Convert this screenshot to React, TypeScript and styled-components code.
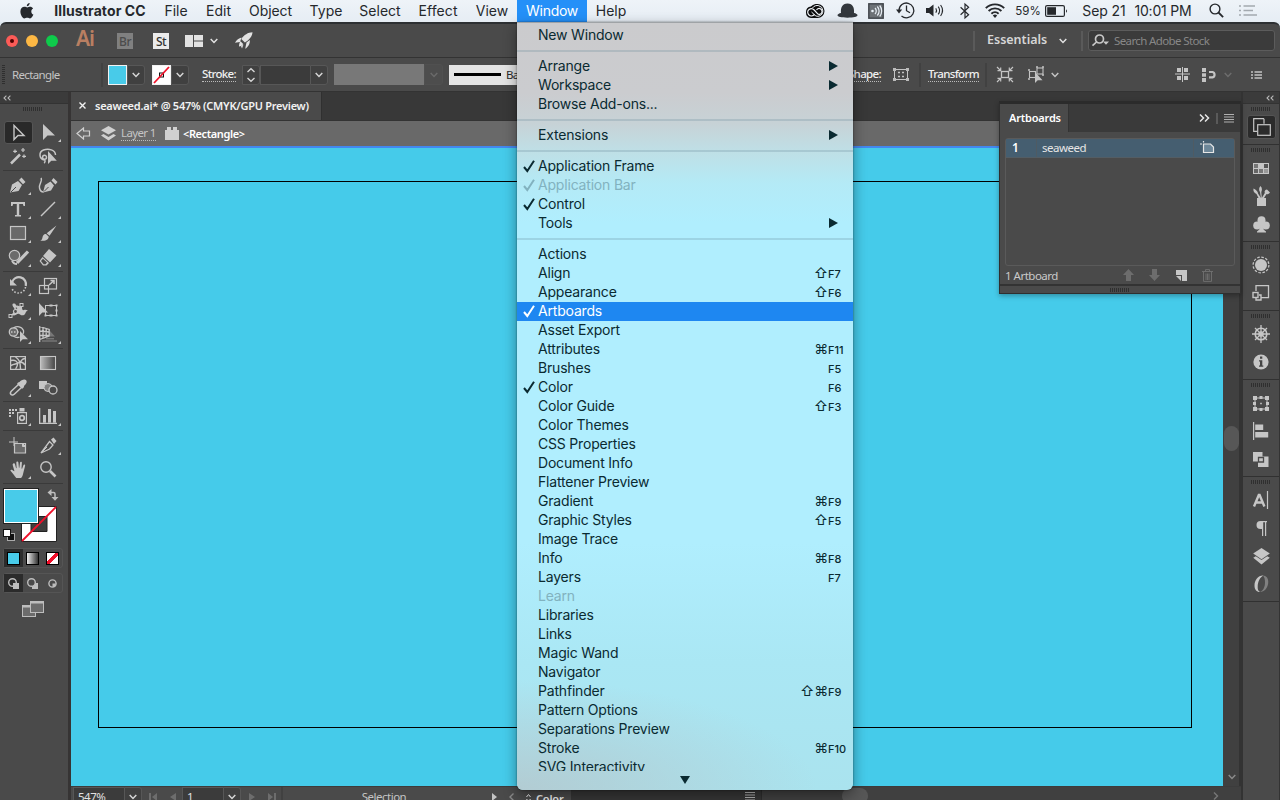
import React from 'react';
import styled, { createGlobalStyle, css } from 'styled-components';

const UI = `'Noto Sans', 'Open Sans', sans-serif`;
const SYSTEM = `Inter, Roboto, sans-serif`;

const GlobalStyle = createGlobalStyle`
  * { box-sizing: border-box; }
  body {
    margin: 0;
    width: 1280px;
    height: 800px;
    overflow: hidden;
    background: #dfe8ef;
    font-family: ${UI};
  }
  svg { display: block; flex: none; overflow: visible; }
`;

const Screen = styled.div`
  position: relative;
  display: flex;
  flex-direction: column;
  width: 1280px;
  height: 800px;
  overflow: hidden;
`;

/* ---------- system menu bar ---------- */

const MenuBar = styled.header`
  display: flex;
  flex: none;
  height: 22px;
  background: linear-gradient(#eef3f8, #e6edf4);
  font-family: ${SYSTEM};
  font-size: 14px;
  color: #25282c;
`;

const MenuCell = styled.div<{ $w: number; $active?: boolean; $bold?: boolean; $ls?: number; $size?: number }>`
  display: flex;
  flex: none;
  align-items: center;
  justify-content: center;
  width: ${p => p.$w}px;
  height: 22px;
  padding-bottom: 1px;
  white-space: pre;
  letter-spacing: ${p => p.$ls ?? 0}px;
  ${p => p.$size && css`font-size: ${p.$size}px;`}
  ${p => p.$bold && css`font-weight: 700;`}
  ${p => p.$active && css`
    background: #2490f8;
    color: #fff;
  `}
`;

const Spacer = styled.div<{ $w?: number }>`
  flex: ${p => (p.$w ? 'none' : '1')};
  width: ${p => (p.$w ? `${p.$w}px` : 'auto')};
`;

/* ---------- application frame ---------- */

const Frame = styled.div`
  display: flex;
  flex: 1;
  flex-direction: column;
  min-height: 0;
  background: #4a4a4a;
  border-top: 2px solid #2d3033;
  border-radius: 6px 6px 0 0;
  overflow: hidden;
`;

const AppBar = styled.div`
  display: flex;
  flex: none;
  align-items: center;
  height: 34px;
  border-bottom: 1px solid #333;
  color: #e2e2e2;
`;

const Lights = styled.div`
  display: flex;
  gap: 8px;
  padding-left: 6px;
  margin-right: 18px;
`;

const Light = styled.span<{ $color: string; $dot?: boolean }>`
  display: flex;
  align-items: center;
  justify-content: center;
  width: 12px;
  height: 12px;
  border-radius: 50%;
  background: ${p => p.$color};
  &::after {
    content: '';
    width: 4px;
    height: 4px;
    border-radius: 50%;
    background: ${p => (p.$dot ? '#4d0000' : 'transparent')};
  }
`;

const Logo = styled.div`
  width: 41px;
  font-size: 21px;
  line-height: 20px;
  font-weight: 600;
  letter-spacing: -1px;
  color: #b97f62;
  transform: translateY(-3px);
`;

const Badges = styled.div`
  display: flex;
  gap: 20px;
  margin-right: 16px;
`;

const Badge = styled.div<{ $dim?: boolean }>`
  width: 16px;
  height: 16px;
  background: ${p => (p.$dim ? '#808080' : '#ebebeb')};
  color: ${p => (p.$dim ? '#4c4c4c' : '#333')};
  font-size: 12px;
  font-weight: 500;
  line-height: 17px;
  text-align: center;
  letter-spacing: -0.5px;
`;

const Divider = styled.span<{ $h?: number; $light?: boolean }>`
  flex: none;
  width: 2px;
  height: ${p => p.$h ?? 24}px;
  background: ${p => (p.$light ? '#5a5a5a' : '#414141')};
`;

const WorkspaceName = styled.div`
  width: 72px;
  margin-left: 12px;
  padding-bottom: 2px;
  font-size: 12.5px;
  font-weight: 600;
  color: #d6d6d6;
`;

const Search = styled.div`
  display: flex;
  align-items: center;
  gap: 5px;
  width: 187px;
  height: 21px;
  margin: 0 5px;
  padding-left: 3px;
  padding-bottom: 1px;
  border: 1px solid #5c5c5c;
  border-radius: 3px;
  background: #3b3b3b;
  color: #878787;
  font-size: 11.5px;
  letter-spacing: -0.62px;
`;

/* ---------- control bar ---------- */

const ControlBar = styled.div`
  display: flex;
  flex: none;
  align-items: center;
  height: 34px;
  border-bottom: 1px solid #333;
  color: #c4c4c4;
  font-size: 11.5px;
`;

const Label = styled.span<{ $w?: number; $ls?: number; $dotted?: boolean; $dark?: boolean }>`
  flex: none;
  width: ${p => (p.$w ? `${p.$w}px` : 'auto')};
  letter-spacing: ${p => p.$ls ?? -0.65}px;
  white-space: nowrap;
  ${p => p.$dark && css`color: #2a2a2a;`}
  ${p => p.$dotted && css`
    height: 14px;
    line-height: 12px;
    font-weight: 500;
    color: #f0f0f0;
    border-bottom: 1px dotted #bbb;
  `}
`;

const CrumbLink = styled(Label)`
  color: #c4c4c4;
  font-weight: 400;
`;

const Swatch = styled.span<{ $fill: string }>`
  display: flex;
  width: 19px;
  height: 20px;
  flex: none;
  border: 1px solid #f2f2f2;
  background: ${p => p.$fill};
  overflow: hidden;
`;

const DropBox = styled.span<{ $w: number; $dim?: boolean; $h?: number }>`
  display: flex;
  flex: none;
  align-items: center;
  justify-content: center;
  width: ${p => p.$w}px;
  height: ${p => p.$h ?? 20}px;
  border: 1px solid ${p => (p.$dim ? '#505050' : '#575757')};
  border-radius: 0 3px 3px 0;
  background: ${p => (p.$dim ? '#4d4d4d' : '#404040')};
  color: ${p => (p.$dim ? '#6a6a6a' : '#d6d6d6')};
`;

const Field = styled.span<{ $w: number; $fill?: string; $h?: number }>`
  display: flex;
  flex: none;
  align-items: center;
  width: ${p => p.$w}px;
  height: ${p => p.$h ?? 20}px;
  padding-left: 4px;
  border: 1px solid ${p => p.$fill ?? '#575757'};
  border-right: 0;
  background: ${p => p.$fill ?? '#3b3b3b'};
  overflow: hidden;
  white-space: nowrap;
`;

const StrokeSample = styled.span`
  width: 47px;
  height: 3px;
  margin-right: 5px;
  background: #000;
`;

/* ---------- body ---------- */

const Body = styled.div`
  display: flex;
  flex: 1;
  min-height: 0;
  overflow: hidden;
`;

const ToolColumn = styled.aside`
  flex: none;
  width: 71px;
  border-right: 3px solid #363434;
`;

const CollapseBar = styled.div<{ $right?: boolean }>`
  display: flex;
  flex: none;
  align-items: center;
  justify-content: ${p => (p.$right ? 'flex-end' : 'flex-start')};
  height: 12px;
  padding: ${p => (p.$right ? '0 5px' : '0 3px')};
  background: #3b3b3b;
  border-bottom: 1px solid #333;
  color: #b5b5b5;
`;

const Grip = styled.div<{ $m?: string }>`
  width: 20px;
  height: 4px;
  margin: ${p => p.$m ?? '0 auto'};
  background: repeating-linear-gradient(90deg, #2f2f2f 0 1px, transparent 1px 2px);
`;

const ControlGrip = styled(Grip)`
  width: 3px;
  height: 19px;
  margin: 0 7px 0 2px;
  background: repeating-linear-gradient(#2f2f2f 0 1px, transparent 1px 2px);
`;

const ToolGroup = styled.div`
  display: grid;
  grid-template-columns: 30px 30px;
  grid-auto-rows: 24px;
  margin-left: 3px;
  color: #c6c6c6;
`;

const ToolRule = styled.div`
  width: 60px;
  height: 1px;
  margin: 2px 0 2px 3px;
  background: #3a3a3a;
`;

const Tool = styled.div<{ $on?: boolean; $more?: boolean }>`
  position: relative;
  display: flex;
  align-items: center;
  justify-content: center;
  ${p => p.$on && css`
    height: 23px;
    width: 29px;
    margin: 1px 0 0 1px;
    background: #292929;
    border: 1px solid #555;
    border-radius: 3px;
  `}
  ${p => p.$more && css`
    &::after {
      content: '';
      position: absolute;
      right: 2px;
      bottom: 2px;
      border-left: 3px solid transparent;
      border-bottom: 3px solid #c6c6c6;
    }
  `}
`;

const Modes = styled.div`
  display: flex;
  flex-direction: column;
  gap: 5px;
  padding: 2px 0 0 3px;
`;

const ModeRow = styled.div`
  display: flex;
  width: 60px;
  height: 20px;
  border: 1px solid #555;
  border-radius: 3px;
`;

const Mode = styled.div<{ $on?: boolean }>`
  display: flex;
  flex: 1;
  align-items: center;
  justify-content: center;
  background: ${p => (p.$on ? '#2b2b2b' : 'transparent')};
  color: #bdbdbd;
`;

const ScreenMode = styled.div`
  width: 60px;
  padding: 3px 0 0 19px;
  color: #bdbdbd;
`;

const ColorChip = styled.span<{ $fill: string }>`
  width: 13px;
  height: 13px;
  border: 1px solid #000;
  background: ${p => p.$fill};
`;

/* ---------- document ---------- */

const Document = styled.main`
  display: flex;
  flex: 1;
  flex-direction: column;
  min-width: 0;
`;

const TabStrip = styled.div`
  flex: none;
  display: flex;
  height: 29px;
  background: #383838;
  border-bottom: 1px solid #333;
`;

const Tab = styled.div`
  display: flex;
  align-items: center;
  width: 251px;
  padding: 0 0 1px 8px;
  gap: 9px;
  background: #4a4a4a;
  border-right: 1px solid #303030;
  color: #f2f2f2;
  font-size: 11px;
  font-weight: 600;
  letter-spacing: -0.25px;
  white-space: nowrap;
`;

const Crumbs = styled.div`
  display: flex;
  flex: none;
  align-items: center;
  height: 25px;
  padding-left: 5px;
  background: #696969;
  color: #d0d0d0;
  font-size: 11.5px;
`;

const Selected = styled.span`
  font-size: 11px;
  font-weight: 600;
  letter-spacing: -0.4px;
  color: #fff;
`;

const Viewport = styled.div`
  display: flex;
  flex: none;
  height: 640px;
`;

const Canvas = styled.div`
  flex: none;
  width: 1152px;
  padding: 33px 0 0 27px;
  background: #45cbea;
  border-top: 2px solid #4388f0;
`;

const Artboard = styled.div`
  width: 1094px;
  height: 547px;
  border: 1px solid #000;
`;

const ScrollTrack = styled.div`
  display: flex;
  flex: none;
  flex-direction: column;
  align-items: center;
  width: 18px;
  padding: 280px 0 6px 1px;
  background: #404040;
  border-right: 2px solid #333;
  color: #8a8a8a;
`;

const Thumb = styled.div<{ $w: number; $h: number }>`
  flex: none;
  width: ${p => p.$w}px;
  height: ${p => p.$h}px;
  border-radius: 8px;
  background: #575757;
`;

const StatusBar = styled.div`
  display: flex;
  flex: none;
  align-items: center;
  height: 20px;
  background: #4a4a4a;
  border-top: 1px solid #3c3c3c;
  color: #e0e0e0;
  font-size: 11.5px;
  letter-spacing: -0.5px;
`;

const StatusCell = styled.div<{ $w: number; $dim?: boolean }>`
  display: flex;
  flex: none;
  align-items: center;
  justify-content: center;
  width: ${p => p.$w}px;
  color: ${p => (p.$dim ? '#6d6d6d' : '#c4c4c4')};
`;

const ColorPanelStub = styled.div`
  display: flex;
  align-items: center;
  width: 241px;
  height: 20px;
  background: #363636;
  border-right: 1px solid #2e2e2e;
`;

const ColorTab = styled.div`
  display: flex;
  align-items: center;
  gap: 5px;
  width: 50px;
  height: 20px;
  padding: 3px 0 0 5px;
  background: #4a4a4a;
  font-size: 11px;
  font-weight: 600;
  letter-spacing: -0.2px;
  color: #eee;
`;

const BottomScroll = styled.div`
  display: flex;
  flex: 1;
  align-items: flex-start;
  justify-content: space-between;
  height: 20px;
  padding: 1px 23px 0 80px;
  background: #404040;
  color: #777;
`;

/* ---------- right dock ---------- */

const Dock = styled.aside`
  flex: none;
  width: 39px;
  border-left: 2px solid #333;
  border-right: 1px solid #333;
`;

const DockSection = styled.section`
  display: flex;
  flex-direction: column;
  padding-bottom: 3px;
  border-top: 1px solid #313131;
  &:first-of-type { border-top: 0; }
`;

const DockItem = styled.div<{ $on?: boolean }>`
  display: flex;
  align-items: center;
  justify-content: center;
  height: 28px;
  color: #c6c6c6;
  ${p => p.$on && css`
    height: 24px;
    margin: 2px 3px 2px 4px;
    background: #2b2b2b;
    border: 1px solid #555;
    border-radius: 3px;
  `}
`;

/* ---------- artboards panel ---------- */

const Panel = styled.div`
  position: absolute;
  left: 999px;
  top: 101px;
  display: flex;
  flex-direction: column;
  width: 242px;
  height: 193px;
  background: #4a4a4a;
  border: 1px solid #2f2f2f;
  border-top: 3px solid #2b2b2b;
  box-shadow: 0 2px 5px rgba(0, 0, 0, 0.3);
  color: #e6e6e6;
  font-size: 11.5px;
  letter-spacing: -0.5px;
`;

const PanelTabs = styled.div`
  display: flex;
  align-items: center;
  gap: 6px;
  height: 28px;
  padding-right: 6px;
  background: linear-gradient(90deg, #4a4a4a 68px, #333 68px 69px, #3a3a3a 69px);
`;

const PanelTitle = styled.div`
  width: 68px;
  padding: 0 0 1px 9px;
  font-size: 11px;
  font-weight: 600;
  color: #fff;
  letter-spacing: -0.2px;
`;

const PanelList = styled.div`
  height: 128px;
  margin: 6px 5px 0 5px;
  border: 1px solid #5a5a5a;
  border-radius: 3px;
`;

const PanelRow = styled.div`
  display: grid;
  grid-template-columns: 31px 157px 1fr;
  height: 19px;
  background: #455e70;
  border-bottom: 1px solid #535d64;
  line-height: 18px;
`;

const PanelCell = styled.div<{ $pad: number; $strong?: boolean }>`
  padding-left: ${p => p.$pad}px;
  border-right: 1px solid #4f5b63;
  ${p => p.$strong && css`
    font-size: 12px;
    font-weight: 600;
    color: #fff;
  `}
  &:last-child { border-right: 0; padding-top: 2px; }
`;

const PanelFooter = styled.div`
  display: flex;
  align-items: center;
  height: 18px;
  padding-left: 5px;
  color: #6d6d6d;
`;

const PanelCount = styled.span`
  width: 118px;
  color: #c9c9c9;
`;

const PanelResize = styled.div`
  display: flex;
  align-items: center;
  flex: 1;
  border-top: 2px solid #333;
`;

/* ---------- window menu ---------- */

const Menu = styled.div`
  position: absolute;
  left: 517px;
  top: 22px;
  width: 336px;
  height: 768px;
  padding-top: 3px;
  border-top: 1px solid #9fa3a6;
  border-radius: 0 0 6px 6px;
  background:
    radial-gradient(ellipse 300px 110px at 0% 100%, rgba(180, 200, 206, 0.85), rgba(180, 208, 216, 0)),
    linear-gradient(#cbcbcd 0, #cbcccf 70px, #c7d2d6 100px, #bfdfe6 128px, #b4eaf6 160px, #b0eefe 200px, #b0eefe 520px, #aae7f4 640px, #aae3ee 768px);
  box-shadow: 0 5px 14px rgba(0, 0, 0, 0.4), 0 0 2px rgba(0, 0, 0, 0.5);
  font-family: ${SYSTEM};
  font-size: 14px;
  letter-spacing: -0.19px;
  color: #0a2a31;
  overflow: hidden;
`;

const MenuItem = styled.div<{ $state?: 'disabled' | 'selected' | 'clipped' }>`
  display: flex;
  align-items: center;
  height: 19px;
  padding-bottom: 2px;
  line-height: 19px;
  white-space: nowrap;
  ${p => p.$state === 'disabled' && css`color: #82b2bf;`}
  ${p => p.$state === 'selected' && css`
    background: #1e87f1;
    color: #fff;
  `}
  ${p => p.$state === 'clipped' && css`
    align-items: flex-start;
    height: 13px;
    padding: 0;
    line-height: 17px;
    overflow: hidden;
  `}
`;

const Mark = styled.span`
  flex: none;
  width: 21px;
  padding-left: 6px;
`;

const ItemText = styled.span`
  flex: 1;
`;

const Keys = styled.span`
  font-size: 14px;
`;

const KeyName = styled.span`
  width: 25px;
  padding-top: 3px;
  font-size: 11px;
  font-weight: 500;
  letter-spacing: 0;
`;

const MenuRule = styled.div`
  height: 2px;
  margin: 5px 0;
  background: rgba(90, 130, 145, 0.24);
`;

const MenuMore = styled.div`
  display: flex;
  justify-content: center;
  padding-top: 5px;
`;

/* ---------- glyphs ---------- */

type Shape = { w?: number; h?: number; box?: string; children: React.ReactNode };

const Glyph = ({ w = 20, h = 20, box, children }: Shape) => (
  <svg width={w} height={h} viewBox={box ?? `0 0 ${w} ${h}`} fill="none" stroke="currentColor" strokeWidth="1.4">
    {children}
  </svg>
);

const Solid = ({ w = 20, h = 20, box, children }: Shape) => (
  <svg width={w} height={h} viewBox={box ?? `0 0 ${w} ${h}`} fill="currentColor">
    {children}
  </svg>
);

const Chevron = () => (
  <Glyph w={8} h={6}><path d="M.7 1l3.3 3.400L7.300 1" strokeWidth="1.500" /></Glyph>
);

const Check = () => (
  <Glyph w={12} h={12}><path d="M1 7l3.300 4L11 .8" strokeWidth="2" /></Glyph>
);

const DoubleLeft = () => (
  <Glyph w={8} h={6}><path d="M3.400.6L1 3l2.400 2.400M7.400.6L5 3l2.400 2.400" strokeWidth="1.100" /></Glyph>
);

const RightArrow = () => <Solid w={9} h={10}><path d="M0 0l9 5-9 5z" /></Solid>;

const Apple = () => (
  <Solid w={14} h={16}>
    <path d="M9.700 0c.1 1.500-1.300 3.300-2.900 3.200C6.600 1.700 8.200.1 9.700 0zM10.100 3.700c-1.100 0-2 .7-2.800.7S5.700 3.700 4.500 3.700C2.200 3.700.4 5.600.4 8.600c0 3.200 2.100 6.900 3.900 6.900 1 0 1.600-.7 2.900-.7s1.800.7 2.800.7c1.500 0 2.800-2.200 3.400-3.900-1.300-.6-2.100-1.700-2.100-3.200 0-1.300.7-2.400 1.800-3-.7-1-1.800-1.700-3-1.700z" />
  </Solid>
);

const CreativeCloud = () => (
  <Glyph w={20} h={14}>
    <path d="M6 2.500C8 .5 10 0 12.500 0a7 7 0 0 1 0 14H6A5.800 5.800 0 0 1 6 2.500z" fill="#0c0d0e" stroke="none" />
    <path d="M9.500 10.500C8 12 5.500 12.300 4 11S2 7 4 5.500s4-.8 5.200.5l3.300 3.600c1 1.200 3 1 4-.4s.6-3.300-.8-4.200-3.200-.2-4.200.8" stroke="#f3f7fa" strokeWidth="1.200" />
    <path d="M7.500 4c1.300-2 4-3 6.300-2.300a5.400 5.400 0 0 1 .2 10.400c-1.500.4-3 .2-4-.8L6.500 8" stroke="#f3f7fa" strokeWidth="1" />
  </Glyph>
);

const Hat = () => (
  <Solid w={21} h={15}><path d="M4 10C3.500 5 5 .5 10.500.5S17.500 5 17 10c2 .3 3.500 1.300 3.500 2.300 0 1.500-4 2.400-10 2.400S.5 13.800.5 12.300C.5 11.300 2 10.300 4 10z" fill="#33383d" /></Solid>
);

const SignalBox = () => (
  <Glyph w={16} h={16}>
    <rect x=".8" y=".8" width="14.400" height="14.400" fill="#6d7276" stroke="#40454a" />
    <circle cx="4.500" cy="8" r="1.300" fill="#e9f0f6" stroke="none" />
    <path d="M7 5a4.200 4.200 0 0 1 0 6M9.300 3.500a6.500 6.500 0 0 1 0 9M11.700 2.500a8.600 8.600 0 0 1 0 11" stroke="#e9f0f6" strokeWidth="1.200" />
  </Glyph>
);

const TimeMachine = () => (
  <Glyph w={19} h={17}>
    <path d="M3 8.300A7.400 7.400 0 1 1 5.500 14M10.500 3.500v5.200l3.500 2" strokeWidth="1.300" />
    <path d="M0 7.500h6.200L3 11.600z" fill="currentColor" stroke="none" />
  </Glyph>
);

const Speaker = () => (
  <Glyph w={17} h={13}>
    <path d="M0 4h3l4.500-3.600v12L3 9H0z" fill="currentColor" stroke="none" />
    <path d="M9.800 4.300a4 4 0 0 1 0 4.400M12.200 2.600a6.500 6.500 0 0 1 0 7.800M14.600 1a9.500 9.500 0 0 1 0 11" strokeWidth="1.100" />
  </Glyph>
);

const Bluetooth = () => (
  <Glyph w={10} h={16}><path d="M.6 4.300l8 7.400L5 15V1l3.600 3.300-8 7.400" strokeWidth="1.200" /></Glyph>
);

const Wifi = () => (
  <Glyph w={20} h={15}>
    <path d="M.8 5.200a13 13 0 0 1 18.400 0M3.600 8a9 9 0 0 1 12.800 0M6.400 10.700a5.200 5.200 0 0 1 7.200 0" strokeWidth="1.900" />
    <path d="M10 15l-2.200-2.400a3.200 3.200 0 0 1 4.400 0z" fill="currentColor" stroke="none" />
  </Glyph>
);

const Battery = () => (
  <Glyph w={23} h={12}>
    <rect x=".6" y=".6" width="18.800" height="10.800" rx="1.500" strokeWidth="1.200" />
    <rect x="2.200" y="2.200" width="8.800" height="7.600" fill="currentColor" stroke="none" />
    <path d="M21 4.200q2 1.800 0 3.600z" fill="currentColor" stroke="none" />
  </Glyph>
);

const Magnifier = ({ size = 15 }: { size?: number }) => (
  <Glyph w={size} h={size} box="0 0 15 15"><circle cx="6" cy="6" r="4.900" /><path d="M9.500 9.500l4.600 4.600" strokeWidth="1.800" /></Glyph>
);

const MenuLines = () => (
  <Glyph w={18} h={11}><path d="M0 1h2M4.500 1H16M0 5.500h2M4.500 5.500H14M0 10h2M4.500 10H18" stroke="#a3a9af" strokeWidth="1.700" /></Glyph>
);

const ArrangeDocs = () => (
  <Solid w={18} h={12}><path d="M0 0h8v12H0zM9 0h9v5.500H9zM9 6.500h9V12H9z" /></Solid>
);

const Rocket = () => (
  <Solid w={18} h={18}>
    <path d="M17.500.3C13 .4 9 3 6.300 6.900l3.600 3.700C14 8 17.300 4.600 17.500.3zM6.500 5.500C4 6 1.500 8 0 10.800l5-.8zM11.500 10.500l-1.300 6.300C13 15.500 15.300 11.500 14.800 8zM5.500 9.300l2.700 2.600c-.7 1.500-2.500 2.500-4.200 2.600 0-1.700.3-3.700 1.500-5.200zM6 14.200l2.500-1.700-1.500 4z" />
  </Solid>
);

const StockSearch = () => (
  <Glyph w={17} h={13}>
    <circle cx="7.500" cy="5" r="4" strokeWidth="1.700" stroke="#c8c8c8" />
    <path d="M4.500 8L.5 11.700" strokeWidth="1.700" stroke="#c8c8c8" />
    <path d="M11 7.500h6l-3 3.300z" fill="#c8c8c8" stroke="none" />
  </Glyph>
);

const Lines = () => (
  <Glyph w={10} h={9}><path d="M0 .5h10M0 3h10M0 5.500h10M0 8h10" strokeWidth="1" stroke="#b0b0b0" /></Glyph>
);

const NoneSlash = () => (
  <svg width="17" height="18" viewBox="0 0 17 18">
    <rect width="17" height="18" fill="#fff" />
    <rect x="6.500" y="7" width="4" height="4" fill="none" stroke="#111" />
    <path d="M1 17L16 1" stroke="#f0122a" strokeWidth="1.800" />
  </svg>
);

const Stepper = () => (
  <Glyph w={10} h={16}><path d="M1.500 5L5 1.800 8.500 5M1.500 11L5 14.200 8.500 11" /></Glyph>
);

const ShapeBox = () => (
  <Glyph w={16} h={13}>
    <rect x="1.500" y="1.500" width="13" height="10" strokeWidth="1" />
    <path d="M0 0h3v3H0zM13 0h3v3h-3zM0 10h3v3H0zM13 10h3v3h-3z" fill="#bbb" stroke="none" />
    <path d="M5 4.500h2M9 4.500h2M5 8.500h2M9 8.500h2" strokeWidth="1.600" />
  </Glyph>
);

const Isolate = () => (
  <Glyph w={16} h={15}>
    <rect x="4.500" y="4.500" width="7" height="6" strokeWidth="1.300" />
    <path d="M0 0l3.500 3.500M16 0l-3.500 3.500M0 15l3.500-3.500M16 15l-3.500-3.500M.5 3.700h3.200V.5M15.500 3.700h-3.200V.5M.5 11.300h3.200v3.200M15.500 11.300h-3.200v3.200" strokeWidth="1.200" />
  </Glyph>
);

const SelectSimilar = () => (
  <Glyph w={16} h={16}>
    <rect x="1.500" y="4.500" width="6" height="6" strokeWidth="1.100" />
    <rect x="9" y="1" width="6" height="6" strokeWidth="1.100" />
    <path d="M0 3h2M0 12h2M8 0h2M14 0h2M14 8h2" />
    <path d="M7 5v11l2.700-2.700h4.800z" fill="currentColor" stroke="none" />
  </Glyph>
);

const PixelGrid = () => (
  <Solid w={15} h={15}><path d="M2 1h4v4H2zM9 1h4v4H9zM2 9h4v4H2zM9 9h4v4H9zM7 0h1v15H7zM0 6.500h15v1H0z" /></Solid>
);

const Snap = () => (
  <Glyph w={15} h={14}>
    <path d="M0 0h4v4H0zM0 5.200h4v3.600H0zM0 10h4v4H0z" fill="currentColor" stroke="none" />
    <path d="M7 4h3.500a2.800 2.800 0 0 1 0 5.400H7" strokeWidth="2.200" />
  </Glyph>
);

const PanelLines = () => (
  <Glyph w={11} h={8}><path d="M0 1h2M3.500 1H11M0 4h2M3.500 4H11M0 7h2M3.500 7H11" strokeWidth="1.300" /></Glyph>
);

const tools: { more?: boolean; on?: boolean; icon: React.ReactNode }[][] = [
  [
    { on: true, icon: <Glyph w={12} h={17}><path d="M1 1.500v14l4-4H11z" /></Glyph> },
    { more: true, icon: <Solid w={13} h={16}><path d="M1 0v16l4.500-4.500H13z" /></Solid> },
    {
      icon: (
        <Glyph w={16} h={16}>
          <path d="M1 15.500L10 6.500" strokeWidth="2.500" />
          <path d="M13 4V0M11 2h4M14 10V6.500M12.200 8.300H16M5 5V1.500M3.200 3.300H7" strokeWidth="1.200" />
        </Glyph>
      ),
    },
    {
      icon: (
        <Glyph w={18} h={16}>
          <path d="M5 12C0 10.500-.5 4 4.500 2S16.500 2 16.500 7M3.500 9.500c0-3 4-3 4-.3S4 12 3.500 9.500zM5.500 12c1 1 .5 2.500-.5 3" strokeWidth="1.500" />
          <path d="M9 3v13l3.300-3.300h5.500z" fill="currentColor" stroke="none" />
        </Glyph>
      ),
    },
  ],
  [
    {
      more: true,
      icon: (
        <Solid w={16} h={16}><path d="M0 15.500L2 7.500 8 4l4 4-3.500 6zM9 3l2.500-2.500L15.500 5 13 7.300z" /><path d="M1 15l5-5" stroke="#4a4a4a" /></Solid>
      ),
    },
    {
      icon: (
        <Glyph w={20} h={16}>
          <path d="M5 15.500L7 8l5.500-3.500 3.500 4-3 5zM13.500 3.500L15.500 1 19.500 5l-2 2.500z" fill="currentColor" stroke="none" />
          <path d="M3 1c2 3-2.500 6-1.500 10 .5 2.500 2 4 4 4" /><path d="M6 14.500l4.500-4.500" stroke="#4a4a4a" strokeWidth="1" />
        </Glyph>
      ),
    },
    { more: true, icon: <Solid w={14} h={15}><path d="M0 0h14v4h-1.500l-.6-2H8.200v11H10v1.500H4V13h1.800V2H2.100L1.500 4H0z" /></Solid> },
    { more: true, icon: <Glyph w={16} h={16}><path d="M1 15L15 1" /></Glyph> },
    { more: true, icon: <Glyph w={16} h={14}><rect x=".5" y=".5" width="15" height="13" fill="#696969" strokeWidth="1.200" /></Glyph> },
    { more: true, icon: <Solid w={17} h={17}><path d="M16.500.5l-7 10.300-2.800-2.500zM6 9l2.800 2.700c-.5 3.500-4 4.300-8.500 4.100 2-.8 1.800-2.500 2.500-4.500C3.400 9.600 4.500 9 6 9z" /></Solid> },
    {
      more: true,
      icon: (
        <Glyph w={21} h={16}>
          <circle cx="6.500" cy="6.500" r="5.200" fill="#6b6b6b" strokeWidth="1.200" />
          <path d="M9 14L20 2.500" strokeWidth="3.200" />
          <path d="M4 11.500c1 3 3 3.500 5 3.500" strokeWidth="2" />
        </Glyph>
      ),
    },
    { more: true, icon: <Solid w={18} h={17}><path d="M10 0l7.500 6.500-6.500 7L4 7zM3.500 8l6.500 6-2.500 2.500H4L.5 12z" /><path d="M2 12l2-2.300 4 3.800-1.500 1.800H4.700z" fill="#4a4a4a" /></Solid> },
  ],
  [
    {
      more: true,
      icon: (
        <Glyph w={17} h={16}>
          <path d="M2 4.500A7 7 0 0 1 15.800 8" strokeWidth="2.200" />
          <path d="M0 1v6.500h7z" fill="currentColor" stroke="none" />
          <path d="M15.500 9a7 7 0 0 1-13.500 1.500" strokeDasharray="1.500 1.700" strokeWidth="1.600" />
        </Glyph>
      ),
    },
    {
      more: true,
      icon: (
        <Glyph w={18} h={16}>
          <rect x="5.500" y=".5" width="12" height="10.500" strokeWidth="1.200" />
          <rect x=".5" y="7.500" width="9" height="8" strokeWidth="1.200" />
          <path d="M10 7l5-4.500M11.500 2.500H15V6" strokeWidth="1.500" />
        </Glyph>
      ),
    },
    {
      more: true,
      icon: (
        <Glyph w={19} h={15}>
          <path d="M3.500 1c3-1.500 4 1 3.500 3s0 2 1.500 1.500M13 4c0 2.500.5 3.500 2 3s2.500 0 4 .500c-1 0-2 1-2.500 2.500-.7 2.500-3.500 3-5.500 1.500-1.500-1.200-2.500-.500-4 .3S3 13 3 10.500c1.500 1 2 .5 2.200-.5S6 7.500 5.500 6 3 3 3.500 1z" fill="currentColor" stroke="none" />
          <path d="M3 12l8.500-8.500" strokeWidth="1.200" /><rect x="0" y="11.500" width="3" height="3" strokeWidth="1" /><rect x="11" y=".5" width="3" height="3" strokeWidth="1" />
          <circle cx="6.500" cy="8.500" r="2" fill="#4a4a4a" strokeWidth="1.200" />
        </Glyph>
      ),
    },
    {
      icon: (
        <Glyph w={19} h={15}>
          <rect x="6.500" y="2.500" width="11" height="10" strokeWidth="1" />
          <path d="M0 0v13l3.300-3.500H9z" fill="currentColor" stroke="none" />
          <path d="M10.500 1.500h3v2h-3zM16.500 1.500h2v2h-2zM16.500 6.500h2v2h-2zM16.500 11.500h2v2h-2zM10.500 11.500h3v2h-3zM5.500 11.500h2v2h-2z" fill="currentColor" stroke="none" />
        </Glyph>
      ),
    },
    {
      more: true,
      icon: (
        <Glyph w={20} h={16}>
          <circle cx="5.500" cy="6" r="4.200" fill="#6a6a6a" strokeWidth="1.300" />
          <path d="M5.500 1.800C9 0 13.500 0 15.500 4.500c.4 1.500 0 2.500-.5 3.500M5.500 10.200c2 1.300 4 1.600 6 1" strokeWidth="1.300" />
          <path d="M3 6h9" strokeDasharray="1.500 1.500" />
          <path d="M12 5v11l2.700-2.700H20z" fill="currentColor" stroke="none" />
        </Glyph>
      ),
    },
    {
      more: true,
      icon: (
        <Glyph w={18} h={16}>
          <path d="M.7 0v16M.7.5l9.500 3V10l-9.500 3.500M4 1.500v11M7.200 2.500v8.800M.7 5l9.500 1M.7 9.500h9.500" strokeWidth="1.300" />
          <path d="M3 15h15M7 12.800h8" stroke="#8a8a8a" strokeWidth="1" /><path d="M11 5l5 5.500h-5z" fill="#777" stroke="none" />
        </Glyph>
      ),
    },
  ],
  [
    { icon: <Glyph w={16} h={14}><rect x=".6" y=".6" width="14.800" height="12.800" strokeWidth="1.200" /><path d="M1 4.500c4-1 7 1 6.500 4S5.500 12 6 13M1 9.500c4-2 6-1 9-3.500s1.500-3 5-3.500M5.500 1c3 2 5 4 5 12M10 6c3 0 4 1.500 5 3" /></Glyph> },
    {
      icon: (
        <Glyph w={16} h={14}>
          <defs><linearGradient id="ramp"><stop offset="0" stopColor="#bbb" /><stop offset="1" stopColor="#444" /></linearGradient></defs>
          <rect x=".5" y=".5" width="15" height="13" fill="url(#ramp)" strokeWidth="1.100" />
        </Glyph>
      ),
    },
    {
      more: true,
      icon: (
        <Glyph w={17} h={17}>
          <path d="M9 5l3 3-7.500 7c-1 1-2.500 1.500-3.500.5s-.5-2.500.5-3.500z" strokeWidth="1.500" />
          <path d="M8 3.500l1.500-.500C11 1 14.500-.5 16 1s.5 4-1.800 5.700l-.5 1.800-1.500 1.200L7 5z" fill="currentColor" stroke="none" />
        </Glyph>
      ),
    },
    {
      icon: (
        <Glyph w={19} h={15}>
          <path d="M0 1h8v8H0z" fill="currentColor" stroke="none" />
          <circle cx="9" cy="7.500" r="4" fill="#808080" strokeWidth="1" /><circle cx="14" cy="10" r="4" fill="#4a4a4a" strokeWidth="1.300" />
        </Glyph>
      ),
    },
  ],
  [
    {
      more: true,
      icon: (
        <Glyph w={18} h={16}>
          <rect x="8.600" y="4.600" width="8.800" height="10.800" strokeWidth="1.200" />
          <circle cx="13" cy="10" r="2.300" strokeWidth="1.700" />
          <path d="M10.500 0h5v3.500h-5zM0 1h2v2H0zM3 1h2v2H3zM6 1h2v2H6zM0 4h2v2H0zM3 4h2v2H3zM0 7h2v2H0z" fill="currentColor" stroke="none" />
        </Glyph>
      ),
    },
    { more: true, icon: <Solid w={18} h={16}><path d="M0 0h1.300v14.700H18V16H0zM4 7h3v7.500H4zM9 1h3v13.500H9zM14 3h3v11.500h-3z" /></Solid> },
  ],
  [
    {
      icon: (
        <Glyph w={18} h={17}>
          <path d="M5.500 6.500h11v6l-0 3.500h-11z" fill="#6b6b6b" strokeWidth="1.200" />
          <path d="M13.500 6.500l3 3h-3z" fill="currentColor" strokeWidth="1" />
          <path d="M0 5h9M5 0v9" strokeWidth="1" />
        </Glyph>
      ),
    },
    {
      more: true,
      icon: (
        <Glyph w={17} h={17}>
          <path d="M9.500 4.500L13 8l-3.500 4L1 16z" strokeWidth="1.300" /><path d="M1 16l6-6" strokeWidth="1" />
          <path d="M11 2.500L13.500.5l3 3.500-2.500 3z" fill="currentColor" stroke="none" />
        </Glyph>
      ),
    },
    {
      more: true,
      icon: (
        <Solid w={17} h={17}>
          <path d="M3.300 2.500c.8-.5 1.600.2 1.800 1l1 3.700.5-.1-.3-5.500c0-1.300 1.900-1.600 2.100-.1l.5 5.300h.5L10 1.700c.2-1.300 2-1.100 1.900.2L11.500 7.500l.6.2 1.300-3.500c.5-1.200 2-.7 1.700.6-.7 3-1.300 5.300-2 8-.4 2.200-1.300 3.700-2.200 4.200H6.300c-1.500-1.700-3.700-5-6-7.500.8-1.300 2-.8 3.800.8l.3-.2-1.700-6c-.2-.7 0-1.300.6-1.600z" />
        </Solid>
      ),
    },
    { icon: <Glyph w={16} h={16}><circle cx="6" cy="6" r="5.200" /><path d="M10 10l5.500 5.500" strokeWidth="2.600" /></Glyph> },
  ],
];

const FillStroke = () => (
  <svg width="68" height="60" viewBox="0 0 68 60">
    <path d="M21.500 20.500h35v35h-35z" fill="#fff" stroke="#222" />
    <path d="M31 30.500h16v15H31z" fill="#3e3e3e" stroke="#222" />
    <path d="M22 55L56 21" stroke="#f0102a" strokeWidth="1.800" />
    <rect x="3.500" y="2.500" width="35" height="35" fill="#fff" stroke="#222" />
    <rect x="5" y="4" width="32" height="32" fill="#48cbe9" />
    <path d="M50.500 6.500h3q1.500 0 1.500 1.500v4" fill="none" stroke="#bdbdbd" strokeWidth="1.500" />
    <path d="M47.500 6.500L51.500 3v7zM51.500 11h7L55 14.700z" fill="#bdbdbd" />
    <rect x="7.500" y="47.500" width="7" height="7" fill="#111" stroke="#aaa" />
    <rect x="3.500" y="43.500" width="7" height="7" fill="#fff" stroke="#111" />
  </svg>
);

const dock: { on?: boolean; icon: React.ReactNode }[][] = [
  [{ on: true, icon: <Glyph w={18} h={18}><path d="M11 .7H.7v12.600H4.500M11 .7v5" strokeWidth="1.200" /><rect x="4.700" y="6.700" width="12.600" height="10.600" strokeWidth="1.200" /></Glyph> }],
  [
    { icon: <Solid w={16} h={11}><path d="M0 0h16v11H0z" /><path d="M1 1h4v4H1z" fill="#777" /><path d="M11 1h4v4h-4z" fill="#555" /><path d="M1 6h4v4H1z" fill="#666" /><path d="M6 6h4v4H6z" fill="#777" /><path d="M11 6h4v4h-4z" fill="#999" /></Solid> },
    { icon: <Solid w={17} h={20}><path d="M4 12h9v8H4zM5.500 12L3.500 8C1 7 0 5 .5 2.500 3 4 5 5 5 7.500L8 12 7 6C5.500 4 6 1.500 7.500 0 9.500 2 9 4.500 8.300 6l.5 6 3-5C11 5 12.500 3.500 14 3.500l3 3c-1.300 2-2.500 1.800-3.500 1.500l-2.500 4z" /></Solid> },
    { icon: <Solid w={17} h={17}><circle cx="8.500" cy="4.300" r="4" /><circle cx="4.200" cy="9.500" r="4" /><circle cx="12.800" cy="9.500" r="4" /><path d="M7.500 7h2c0 4 .5 7 3.500 8.500v1H4v-1C7 14 7.500 11 7.500 7z" /></Solid> },
  ],
  [
    { icon: <Glyph w={18} h={18}><circle cx="9" cy="9" r="6" fill="currentColor" stroke="none" /><circle cx="9" cy="9" r="7.900" strokeDasharray="2.600 1.540" strokeWidth="1.200" /></Glyph> },
    { icon: <Glyph w={18} h={16}><path d="M4 6V.7h12.500v12H9" strokeWidth="1.300" /><rect x="1" y="7.500" width="5" height="5" /><path d="M7 10h2v5H4v-2" /></Glyph> },
  ],
  [
    { icon: <Glyph w={18} h={18}><circle cx="9" cy="9" r="5.800" strokeWidth="1.600" /><circle cx="9" cy="9" r="2" /><path d="M9 0v18M0 9h18M3 3l12 12M15 3L3 15" strokeWidth="1.300" /></Glyph> },
    { icon: <Solid w={16} h={16}><circle cx="8" cy="8" r="7.600" /><path d="M7 2.500h2.300v2.300H7zM6 6.300h3.300v5.200h1v1.300H6v-1.300h1V7.600H6z" fill="#444" /></Solid> },
  ],
  [
    { icon: <Glyph w={16} h={15}><rect x="2" y="2" width="12" height="11" strokeWidth="1" /><path d="M0 0h4v4H0zM6.500 0h3v3h-3zM12 0h4v4h-4zM0 6h3v3H0zM13 6h3v3h-3zM0 11h4v4H0zM6.500 12h3v3h-3zM12 11h4v4h-4zM7.200 6.700h1.600v1.600H7.200z" fill="currentColor" stroke="none" /></Glyph> },
    { icon: <Solid w={16} h={18}><path d="M0 0h1.200v18H0zM2.200 2.500h8v5.500h-8zM2.200 10h13v5.500h-13z" /></Solid> },
    { icon: <Solid w={16} h={15}><path d="M0 0h9.500v4.500H15.500V15H5V9.500H0z" /><path d="M5.500 5.500h5v4.500h-5z" stroke="#4a4a4a" strokeWidth="1.300" /></Solid> },
  ],
  [
    { icon: <Glyph w={16} h={18}><path d="M1 15.500L5.800 4h.8L11.400 15.500M3 11.500h6.500" strokeWidth="2.400" /><path d="M14.500 0v18" strokeWidth="1.200" /></Glyph> },
    { icon: <Solid w={11} h={15}><path d="M4.500 0H11v1.300h-.8V15H9V1.300H7.200V15H6V8H4.500a4 4 0 0 1 0-8z" /></Solid> },
    { icon: <Solid w={17} h={17}><path d="M8.500 0l8.300 5.500-8.300 5.700L.2 5.500z" /><path d="M.2 9.800L2.800 8.200l5.700 3.800 5.700-3.800 2.600 1.600-8.300 6.700z" /></Solid> },
    {
      icon: (
        <Glyph w={15} h={18}>
          <path d="M9.500.5C4.500 0 .5 5 .5 10.500c0 4 2 6.500 5.500 6.500-2-1-2.500-3-2.300-6C4 6.500 6 2 9.500.5z" fill="currentColor" stroke="none" />
          <path d="M8.500.5c4 0 6.200 3 5.700 7.500-.5 5-4 9-8.200 9 3.500-1.500 5-5.500 5-9.500 0-3-.5-6-2.500-7z" fill="#808080" stroke="none" />
        </Glyph>
      ),
    },
  ],
];

const BackArrow = () => <Glyph w={15} h={13}><path d="M1 6.500L7.500 1v3h6v5h-6v3z" strokeWidth="1.200" /></Glyph>;

const Layers = () => (
  <Solid w={15} h={15}><path d="M7.500 0L15 4.300 7.500 8.600 0 4.300z" /><path d="M0 9.500L2.500 8l5 3 5-3L15 9.500l-7.500 5z" /></Solid>
);

const Brick = () => <Solid w={14} h={13}><path d="M0 3h2V0h4v3h2V0h4v3h2v10H0z" /></Solid>;

const NewArtboard = () => (
  <Glyph w={14} h={12}><path d="M3.500 3h7l3 3v5.500h-10z" fill="#6d8799" strokeWidth="1.200" /><path d="M0 3h2M3.500 0v1.500" strokeWidth="1.200" /></Glyph>
);

/* ---------- window menu contents ---------- */

type Entry = {
  text: string;
  checked?: boolean;
  submenu?: boolean;
  mods?: string;
  fkey?: string;
  state?: 'disabled' | 'selected' | 'clipped';
};

const menuGroups: Entry[][] = [
  [{ text: 'New Window' }],
  [{ text: 'Arrange', submenu: true }, { text: 'Workspace', submenu: true }, { text: 'Browse Add-ons...' }],
  [{ text: 'Extensions', submenu: true }],
  [
    { text: 'Application Frame', checked: true },
    { text: 'Application Bar', checked: true, state: 'disabled' },
    { text: 'Control', checked: true },
    { text: 'Tools', submenu: true },
  ],
  [
    { text: 'Actions' },
    { text: 'Align', mods: '⇧', fkey: 'F7' },
    { text: 'Appearance', mods: '⇧', fkey: 'F6' },
    { text: 'Artboards', checked: true, state: 'selected' },
    { text: 'Asset Export' },
    { text: 'Attributes', mods: '⌘', fkey: 'F11' },
    { text: 'Brushes', fkey: 'F5' },
    { text: 'Color', checked: true, fkey: 'F6' },
    { text: 'Color Guide', mods: '⇧', fkey: 'F3' },
    { text: 'Color Themes' },
    { text: 'CSS Properties' },
    { text: 'Document Info' },
    { text: 'Flattener Preview' },
    { text: 'Gradient', mods: '⌘', fkey: 'F9' },
    { text: 'Graphic Styles', mods: '⇧', fkey: 'F5' },
    { text: 'Image Trace' },
    { text: 'Info', mods: '⌘', fkey: 'F8' },
    { text: 'Layers', fkey: 'F7' },
    { text: 'Learn', state: 'disabled' },
    { text: 'Libraries' },
    { text: 'Links' },
    { text: 'Magic Wand' },
    { text: 'Navigator' },
    { text: 'Pathfinder', mods: '⇧⌘', fkey: 'F9' },
    { text: 'Pattern Options' },
    { text: 'Separations Preview' },
    { text: 'Stroke', mods: '⌘', fkey: 'F10' },
    { text: 'SVG Interactivity', state: 'clipped' },
  ],
];

const WindowMenu = () => (
  <Menu>
    {menuGroups.map((group, i) => (
      <React.Fragment key={i}>
        {i > 0 && <MenuRule />}
        {group.map(item => (
          <MenuItem key={item.text} $state={item.state}>
            <Mark>{item.checked && <Check />}</Mark>
            <ItemText>{item.text}</ItemText>
            {item.submenu && <><RightArrow /><Spacer $w={15} /></>}
            {item.mods && <Keys>{item.mods}</Keys>}
            {item.fkey && <KeyName>{item.fkey}</KeyName>}
          </MenuItem>
        ))}
      </React.Fragment>
    ))}
    <MenuMore><Solid w={10} h={8}><path d="M0 0h10L5 8z" /></Solid></MenuMore>
  </Menu>
);

const ArtboardsPanel = () => (
  <Panel>
    <PanelTabs>
      <PanelTitle>Artboards</PanelTitle>
      <Spacer />
      <Glyph w={11} h={8}><path d="M1 .5L4.500 4 1 7.500M6 .5L9.500 4 6 7.500" strokeWidth="1.500" /></Glyph>
      <Divider $h={11} $light />
      <Lines />
    </PanelTabs>
    <PanelList>
      <PanelRow>
        <PanelCell $pad={6} $strong>1</PanelCell>
        <PanelCell $pad={5}>seaweed</PanelCell>
        <PanelCell $pad={6}><NewArtboard /></PanelCell>
      </PanelRow>
    </PanelList>
    <PanelFooter>
      <PanelCount>1 Artboard</PanelCount>
      <Solid w={11} h={12}><path d="M5.500 0L11 6H8v6H3V6H0z" /></Solid>
      <Spacer $w={15} />
      <Solid w={11} h={12}><path d="M5.500 12L11 6H8V0H3v6H0z" /></Solid>
      <Spacer $w={16} />
      <Solid w={11} h={11}><path d="M0 0h11v11H6V5H0z" fill="#c6c6c6" /><path d="M0 6h5v5z" fill="#c6c6c6" /></Solid>
      <Spacer $w={15} />
      <Glyph w={11} h={13}><path d="M0 2.500h11M3.500 2V.6h4V2M1.500 3v9.400h8V3M4 4.500v6.500M5.500 4.500v6.500M7 4.500v6.500" strokeWidth="1" /></Glyph>
    </PanelFooter>
    <PanelResize><Grip /></PanelResize>
  </Panel>
);

const App: React.FC = () => (
  <Screen>
    <GlobalStyle />
    <MenuBar>
      <MenuCell $w={54}><Apple /></MenuCell>
      <MenuCell $w={92} $bold $ls={0.1}>Illustrator CC</MenuCell>
      <Spacer $w={9} />
      <MenuCell $w={42}>File</MenuCell>
      <MenuCell $w={43}>Edit</MenuCell>
      <MenuCell $w={61} $ls={-0.1}>Object</MenuCell>
      <MenuCell $w={50}>Type</MenuCell>
      <MenuCell $w={58}>Select</MenuCell>
      <MenuCell $w={58} $ls={0.1}>Effect</MenuCell>
      <MenuCell $w={50}>View</MenuCell>
      <MenuCell $w={70} $active $ls={-0.3}>Window</MenuCell>
      <MenuCell $w={48}>Help</MenuCell>
      <Spacer />
      <MenuCell $w={28}><CreativeCloud /></MenuCell>
      <Spacer $w={4} />
      <MenuCell $w={28}><Hat /></MenuCell>
      <MenuCell $w={30}><SignalBox /></MenuCell>
      <MenuCell $w={28}><TimeMachine /></MenuCell>
      <MenuCell $w={30}><Speaker /></MenuCell>
      <MenuCell $w={32}><Bluetooth /></MenuCell>
      <MenuCell $w={28}><Wifi /></MenuCell>
      <Spacer $w={5} />
      <MenuCell $w={28} $size={11.5}>59%</MenuCell>
      <MenuCell $w={29}><Battery /></MenuCell>
      <Spacer $w={8} />
      <MenuCell $w={50} $ls={-0.1}>Sep 21</MenuCell>
      <Spacer $w={2} />
      <MenuCell $w={64} $ls={-0.2}>10:01 PM</MenuCell>
      <MenuCell $w={42}><Magnifier /></MenuCell>
      <MenuCell $w={22}><MenuLines /></MenuCell>
      <Spacer $w={21} />
    </MenuBar>

    <Frame>
      <AppBar>
        <Lights>
          <Light $color="#fc5b57" $dot />
          <Light $color="#fdb844" />
          <Light $color="#0ecb4b" />
        </Lights>
        <Logo>Ai</Logo>
        <Badges>
          <Badge $dim>Br</Badge>
          <Badge>St</Badge>
        </Badges>
        <ArrangeDocs />
        <Spacer $w={7} />
        <Chevron />
        <Spacer $w={17} />
        <Rocket />
        <Spacer />
        <Divider $h={20} $light />
        <WorkspaceName>Essentials</WorkspaceName>
        <Chevron />
        <Spacer $w={14} />
        <Divider $h={20} $light />
        <Search><StockSearch />Search Adobe Stock</Search>
      </AppBar>

      <ControlBar>
        <ControlGrip />
        <Label $w={89}>Rectangle</Label>
        <Divider />
        <Spacer $w={5} />
        <Swatch $fill="#48cbe9" />
        <DropBox $w={18}><Chevron /></DropBox>
        <Spacer $w={7} />
        <Swatch $fill="#fff"><NoneSlash /></Swatch>
        <DropBox $w={18}><Chevron /></DropBox>
        <Spacer $w={13} />
        <Label $dotted $w={34}>Stroke:</Label>
        <Spacer $w={6} />
        <DropBox $w={18}><Stepper /></DropBox>
        <Field $w={50} />
        <DropBox $w={18}><Chevron /></DropBox>
        <Spacer $w={6} />
        <Field $w={90} $fill="#787878" $h={21} />
        <DropBox $w={19} $dim $h={21}><Chevron /></DropBox>
        <Spacer $w={6} />
        <Field $w={90} $fill="#e4e4e4"><StrokeSample /><Label $dark>Basic</Label></Field>
        <Spacer />
        <Label $dotted>Shape:</Label>
        <Spacer $w={12} />
        <ShapeBox />
        <Spacer $w={10} />
        <Divider />
        <Spacer $w={7} />
        <Label $dotted $w={51}>Transform</Label>
        <Spacer $w={6} />
        <Divider />
        <Spacer $w={10} />
        <Isolate />
        <Spacer $w={15} />
        <SelectSimilar />
        <Spacer $w={7} />
        <Chevron />
        <Spacer $w={116} />
        <PixelGrid />
        <Spacer $w={12} />
        <Snap />
        <Spacer $w={7} />
        <StatusCell $w={8} $dim><Chevron /></StatusCell>
        <Spacer $w={19} />
        <PanelLines />
        <Spacer $w={18} />
      </ControlBar>

      <Body>
        <ToolColumn>
          <CollapseBar><DoubleLeft /></CollapseBar>
          <Grip $m="3px 0 9px 23px" />
          {tools.map((group, i) => (
            <React.Fragment key={i}>
              <ToolGroup>
                {group.map((tool, j) => (
                  <Tool key={j} $on={tool.on} $more={tool.more}>{tool.icon}</Tool>
                ))}
              </ToolGroup>
              <ToolRule />
            </React.Fragment>
          ))}
          <FillStroke />
          <Modes>
            <ModeRow>
              <Mode $on><ColorChip $fill="#48cbe9" /></Mode>
              <Mode><ColorChip $fill="linear-gradient(90deg, #eee, #333)" /></Mode>
              <Mode><ColorChip $fill="linear-gradient(135deg, #fff 38%, #f0102a 38% 62%, #fff 62%)" /></Mode>
            </ModeRow>
            <ModeRow>
              <Mode $on><Glyph w={11} h={11}><circle cx="4.500" cy="4.500" r="3.800" /><path d="M5 5h6v6H5z" fill="currentColor" stroke="none" /></Glyph></Mode>
              <Mode><Glyph w={11} h={11}><path d="M5 5h6v6H5z" fill="currentColor" stroke="none" /><circle cx="4.500" cy="4.500" r="3.800" fill="#4a4a4a" /></Glyph></Mode>
              <Mode><Glyph w={9} h={9}><circle cx="4.500" cy="4.500" r="3.600" /><path d="M4.500 4.500h3.500l-1 3.500h-2.500z" fill="currentColor" stroke="none" /></Glyph></Mode>
            </ModeRow>
            <ScreenMode>
              <Glyph w={22} h={16}>
                <rect x=".5" y="4.500" width="13" height="11" fill="#6c6c6c" strokeWidth="1" />
                <rect x="8.500" y=".5" width="13" height="11" fill="#6c6c6c" strokeWidth="1" />
                <path d="M0 5.500h8M8 1.500h14" strokeWidth="2" />
              </Glyph>
            </ScreenMode>
          </Modes>
        </ToolColumn>

        <Document>
          <TabStrip>
            <Tab>
              <Glyph w={7} h={7}><path d="M.5.5l6 6M6.500.5l-6 6" /></Glyph>
              seaweed.ai* @ 547% (CMYK/GPU Preview)
            </Tab>
          </TabStrip>
          <Crumbs>
            <BackArrow />
            <Spacer $w={10} />
            <Layers />
            <Spacer $w={5} />
            <CrumbLink $dotted $w={35}>Layer 1</CrumbLink>
            <Spacer $w={9} />
            <Brick />
            <Spacer $w={4} />
            <Selected>&lt;Rectangle&gt;</Selected>
          </Crumbs>
          <Viewport>
            <Canvas><Artboard /></Canvas>
            <ScrollTrack>
              <Thumb $w={15} $h={25} />
              <Spacer />
              <Chevron />
            </ScrollTrack>
          </Viewport>
          <StatusBar>
            <Spacer $w={2} />
            <Field $w={51}>547%</Field>
            <DropBox $w={18}><Chevron /></DropBox>
            <StatusCell $w={22} $dim><Solid w={8} h={8}><path d="M0 0h2v8H0zM8 0v8L3 4z" /></Solid></StatusCell>
            <StatusCell $w={18} $dim><Solid w={6} h={8}><path d="M6 0v8L0 4z" /></Solid></StatusCell>
            <Field $w={41}>1</Field>
            <DropBox $w={18}><Chevron /></DropBox>
            <StatusCell $w={22} $dim><Solid w={6} h={8}><path d="M0 0v8l6-4z" /></Solid></StatusCell>
            <StatusCell $w={18} $dim><Solid w={8} h={8}><path d="M6 0h2v8H6zM0 0v8l5-4z" /></Solid></StatusCell>
            <Divider $h={19} />
            <StatusCell $w={202}>Selection</StatusCell>
            <StatusCell $w={18}><Solid w={5} h={8}><path d="M0 0v8l5-4z" /></Solid></StatusCell>
            <StatusCell $w={16}><Glyph w={5} h={8}><path d="M4.500.5L1 4l3.500 3.500" stroke="#888" /></Glyph></StatusCell>
            <Spacer $w={2} />
            <ColorPanelStub>
              <ColorTab><Glyph w={5} h={8}><path d="M.5 3l2-2.500 2 2.500M.5 5l2 2.500 2-2.500" strokeWidth="1" /></Glyph>Color</ColorTab>
              <Spacer />
              <Lines />
              <Spacer $w={6} />
            </ColorPanelStub>
            <BottomScroll>
              <Thumb $w={26} $h={16} />
              <Glyph w={5} h={14}><path d="M1 4.500L4.500 8 1 11.500" /></Glyph>
            </BottomScroll>
          </StatusBar>
        </Document>

        <Dock>
          <CollapseBar $right><DoubleLeft /></CollapseBar>
          {dock.map((section, i) => (
            <DockSection key={i}>
              <Grip $m="3px 0 2px 8px" />
              {section.map((item, j) => (
                <DockItem key={j} $on={item.on}>{item.icon}</DockItem>
              ))}
            </DockSection>
          ))}
          <DockSection />
        </Dock>
      </Body>
    </Frame>

    <ArtboardsPanel />
    <WindowMenu />
  </Screen>
);

export default App;
